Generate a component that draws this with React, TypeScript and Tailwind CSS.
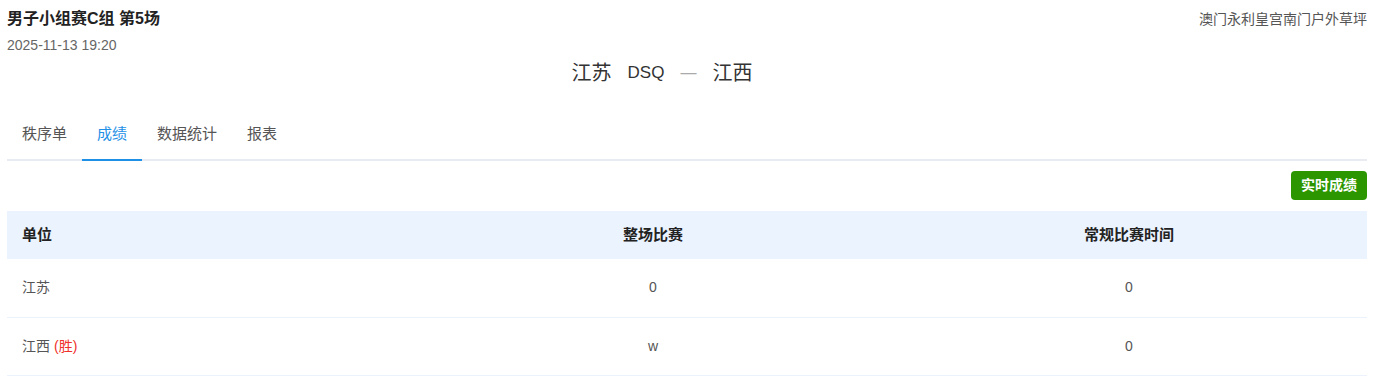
import React, { useState } from 'react';

interface Row {
  unit: string;
  win?: boolean;
  whole: string;
  regular: string;
}

const rows: Row[] = [
  { unit: '江苏', whole: '0', regular: '0' },
  { unit: '江西', win: true, whole: 'w', regular: '0' },
];

const tabs = ['秩序单', '成绩', '数据统计', '报表'];

export default function App() {
  const [activeTab, setActiveTab] = useState(1);

  return (
    <div
      className="bg-white pl-[7px] pr-[16px] text-[#606266]"
      style={{ fontFamily: '"Liberation Sans", Arial, "Noto Sans CJK SC", sans-serif' }}
    >
      {/* Header */}
      <div className="flex justify-between pt-[9px]">
        <div>
          <h1 className="text-[16px] font-bold text-[#222] leading-[20px]">男子小组赛C组 第5场</h1>
          <p className="text-[14px] text-[#666] mt-[6px] leading-[20px]">2025-11-13 19:20</p>
        </div>
        <div className="text-[14px] text-[#555] leading-[20px]">澳门永利皇宫南门户外草坪</div>
      </div>

      <div className="flex justify-center items-center text-[20px] text-[#333] mt-[6px] leading-[24px] pr-[50px]">
        <span>江苏</span>
        <span className="ml-[16px] text-[17px]">DSQ</span>
        <span className="mx-[16px] text-[#aaa] text-[16px]">—</span>
        <span>江西</span>
      </div>

      {/* Tabs */}
      <div className="mt-[24px] flex border-b-2 border-[#e8ecf2]">
        {tabs.map((t, i) => (
          <button
            key={t}
            onClick={() => setActiveTab(i)}
            className={`px-[15px] h-[52px] text-[15px] -mb-[2px] border-b-2 ${
              i === activeTab ? 'text-[#1e90e6] border-[#1e90e6]' : 'text-[#555] border-transparent'
            }`}
          >
            {t}
          </button>
        ))}
      </div>

      <div className="flex justify-end mt-[10px]">
        <button className="bg-[#2b9600] text-white text-[14px] font-bold rounded-[4px] h-[29px] w-[76px]">
          实时成绩
        </button>
      </div>

      {/* Table */}
      <table className="w-full mt-[11px] table-fixed">
        <colgroup>
          <col className="w-[30%]" />
          <col className="w-[35%]" />
          <col className="w-[35%]" />
        </colgroup>
        <thead>
          <tr className="bg-[#ebf3fe] h-[48px] text-[#222] font-bold text-[15px]">
            <th className="text-left pl-[15px]">单位</th>
            <th className="text-center">整场比赛</th>
            <th className="text-center">常规比赛时间</th>
          </tr>
        </thead>
        <tbody className="text-[14px]">
          {rows.map((r) => (
            <tr key={r.unit} className="h-[58px] border-b border-[#ebf2fb]">
              <td className="pl-[15px] text-[#555]">
                {r.unit}
                {r.win && <span className="text-[#f0302a] ml-[4px]">(胜)</span>}
              </td>
              <td className="text-center text-[#555]">{r.whole}</td>
              <td className="text-center text-[#555]">{r.regular}</td>
            </tr>
          ))}
        </tbody>
      </table>
    </div>
  );
}
